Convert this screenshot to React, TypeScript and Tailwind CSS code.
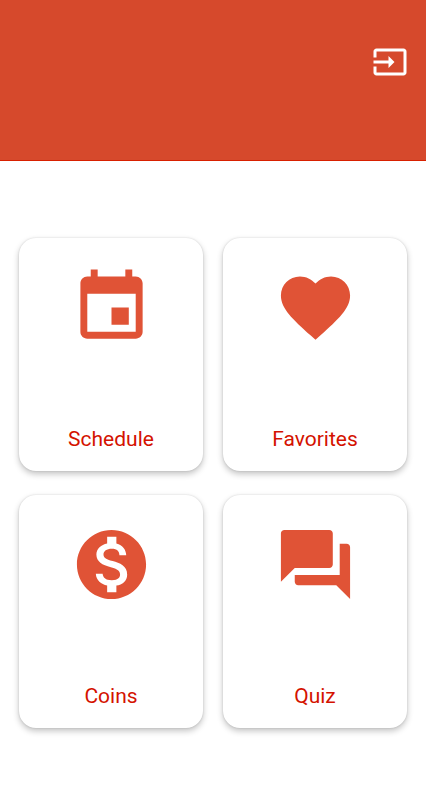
const tiles = [
  {
    label: 'Schedule',
    path: 'M17 12h-5v5h5v-5zM16 1v2H8V1H6v2H5c-1.11 0-1.99.9-1.99 2L3 19c0 1.1.89 2 2 2h14c1.1 0 2-.9 2-2V5c0-1.1-.9-2-2-2h-1V1h-2zm3 18H5V8h14v11z',
  },
  {
    label: 'Favorites',
    path: 'M12 21.35l-1.45-1.32C5.4 15.36 2 12.28 2 8.5 2 5.42 4.42 3 7.5 3c1.74 0 3.41.81 4.5 2.09C13.09 3.81 14.76 3 16.5 3 19.58 3 22 5.42 22 8.5c0 3.78-3.4 6.86-8.55 11.54L12 21.35z',
  },
  {
    label: 'Coins',
    path: 'M12 2C6.48 2 2 6.48 2 12s4.48 10 10 10 10-4.48 10-10S17.52 2 12 2zm1.41 16.09V20h-2.67v-1.93c-1.71-.36-3.16-1.46-3.27-3.4h1.96c.1 1.05.82 1.87 2.65 1.87 1.96 0 2.4-.98 2.4-1.59 0-.83-.44-1.61-2.67-2.14-2.48-.6-4.18-1.62-4.18-3.67 0-1.72 1.39-2.84 3.11-3.21V4h2.67v1.95c1.86.45 2.79 1.86 2.85 3.39H14.3c-.05-1.11-.64-1.87-2.22-1.87-1.5 0-2.4.68-2.4 1.64 0 .84.65 1.39 2.67 1.91s4.18 1.39 4.18 3.91c-.01 1.83-1.38 2.83-3.12 3.16z',
  },
  {
    label: 'Quiz',
    path: 'M21 6h-2v9H6v2c0 .55.45 1 1 1h11l4 4V7c0-.55-.45-1-1-1zm-4 6V3c0-.55-.45-1-1-1H3c-.55 0-1 .45-1 1v14l4-4h10c.55 0 1-.45 1-1z',
  },
];

function Tile({ label, path }: { label: string; path: string }) {
  return (
    <button
      type="button"
      className="flex h-[233px] flex-col items-center justify-between rounded-[17px] bg-white pt-7 pb-4 shadow-[0_3px_6px_rgba(0,0,0,0.24),0_0_2px_rgba(0,0,0,0.14)]"
    >
      <svg viewBox="0 0 24 24" className="size-[83px] fill-[#e05336]" aria-hidden="true">
        <path d={path} />
      </svg>
      <span className="text-[21px] leading-8 text-[#d41200]">{label}</span>
    </button>
  );
}

export default function App() {
  return (
    <div className="min-h-screen bg-white font-[Roboto,sans-serif]">
      <header className="flex h-[161px] items-start justify-end border-b border-[#d82000] bg-[#d6492c] px-[18px] pt-11">
        <button type="button" aria-label="Sign in">
          <svg viewBox="0 0 24 24" className="size-9 fill-white" aria-hidden="true">
            <path d="M21 3.01H3c-1.1 0-2 .9-2 2V9h2V4.99h18v14.03H3V15H1v4.01c0 1.1.9 1.98 2 1.98h18c1.1 0 2-.88 2-1.98v-14c0-1.11-.9-2-2-2zM11 16l4-4-4-4v3H1v2h10v3z" />
          </svg>
        </button>
      </header>
      <main className="grid grid-cols-2 gap-x-5 gap-y-6 px-[19px] pt-[77px] pb-18">
        {tiles.map((tile) => (
          <Tile key={tile.label} label={tile.label} path={tile.path} />
        ))}
      </main>
    </div>
  );
}
